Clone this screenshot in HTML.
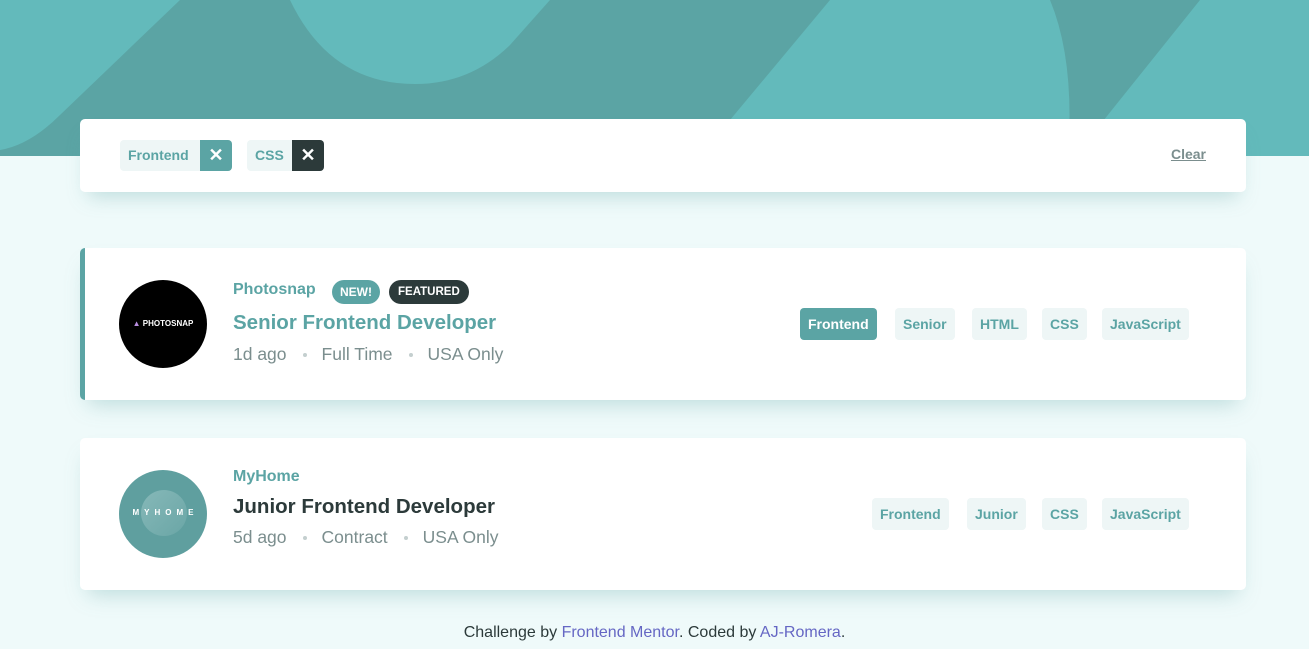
<!DOCTYPE html>
<html><head><meta charset="utf-8"><style>
*{box-sizing:border-box;margin:0;padding:0}
body{width:1309px;height:649px;overflow:hidden;background:#effafa;font-family:"Liberation Sans",sans-serif;position:relative}
.hdr{position:absolute;left:0;top:0;width:1309px;height:156px}
.card{position:absolute;left:80px;width:1166px;background:#fff;border-radius:5px;box-shadow:0 12px 20px -8px rgba(91,164,164,.35)}
.tag{position:absolute;height:32px;line-height:32px;padding:0 8px;border-radius:4px;background:#eef6f6;color:#5ba4a4;font-weight:bold;font-size:14px}
.abs{position:absolute;white-space:nowrap}
.meta{color:#7b8e8e;font-size:17.5px}
.dot{display:inline-block;width:4px;height:4px;border-radius:50%;background:#c4cfcf;margin:0 15px 0 16px;vertical-align:middle}
</style></head><body>
<svg class="hdr" viewBox="0 0 1309 156" preserveAspectRatio="none">
<rect width="1309" height="156" fill="#5ba4a4"/>
<path d="M0 0 L180 0 L60 115 Q30 145 0 150 Z" fill="#63babb"/>
<path d="M290 0 L550 0 L510 45 Q470 84 415 84 Q330 84 290 0 Z" fill="#63babb"/>
<path d="M830 0 L1050 0 Q1075 60 1068 156 L700 156 Z" fill="#63babb"/>
<path d="M1200 0 L1309 0 L1309 156 L1075 156 Z" fill="#63babb"/>
</svg>
<div class="card" style="top:119px;height:73px">
 <div class="tag" style="left:40px;top:21px;height:31px;line-height:31px;padding:0 0 0 8px;width:112px;overflow:hidden">Frontend<span style="position:absolute;right:0;top:0;width:32px;height:31px;background:#5ba4a4;color:#fff;text-align:center;font-size:18px">✕</span></div>
 <div class="tag" style="left:167px;top:21px;height:31px;line-height:31px;padding:0 0 0 8px;width:77px;overflow:hidden">CSS<span style="position:absolute;right:0;top:0;width:32px;height:31px;background:#2c3a3a;color:#fff;text-align:center;font-size:18px">✕</span></div>
 <div class="abs" style="right:40px;top:27px;color:#7b8e8e;font-weight:bold;font-size:14px;text-decoration:underline">Clear</div>
</div>
<div class="card" style="top:248px;height:152px;border-left:5px solid #5ba4a4">
 <div class="abs" style="left:34px;top:32px;width:88px;height:88px;border-radius:50%;background:#000;color:#fff;font-size:8px;font-weight:bold;text-align:center;line-height:88px"><span style="color:#b98ee0">▲</span> PHOTOSNAP</div>
 <div class="abs" style="left:148px;top:33px;color:#5ba4a4;font-weight:bold;font-size:16px">Photosnap</div>
 <div class="abs" style="left:247px;top:32px;height:24px;line-height:24px;padding:0 8px;border-radius:12px;background:#5ba4a4;color:#fff;font-size:12px;font-weight:bold">NEW!</div>
 <div class="abs" style="left:304px;top:32px;height:24px;line-height:24px;padding:0 9px;border-radius:12px;background:#2c3a3a;color:#fff;font-size:11.5px;font-weight:bold">FEATURED</div>
 <div class="abs" style="left:148px;top:63px;color:#5ba4a4;font-weight:bold;font-size:20.5px">Senior Frontend Developer</div>
 <div class="abs meta" style="left:148px;top:96px">1d ago<span class="dot"></span>Full Time<span class="dot"></span>USA Only</div>
 <div class="tag" style="left:715px;top:60px;background:#5ba4a4;color:#fff">Frontend</div>
 <div class="tag" style="left:810px;top:60px">Senior</div>
 <div class="tag" style="left:887px;top:60px">HTML</div>
 <div class="tag" style="left:957px;top:60px">CSS</div>
 <div class="tag" style="left:1017px;top:60px">JavaScript</div>
</div>
<div class="card" style="top:438px;height:152px">
 <div class="abs" style="left:39px;top:32px;width:88px;height:88px;border-radius:50%;background:#5f9f9f"><div style="position:absolute;left:22px;top:20px;width:46px;height:46px;border-radius:50%;background:linear-gradient(135deg,#86b8b8,#6aa6a6)"></div><div style="position:absolute;width:88px;top:38px;text-align:center;color:#fff;font-size:8px;font-weight:bold;letter-spacing:5px;padding-left:5px">MYHOME</div></div>
 <div class="abs" style="left:153px;top:30px;color:#5ba4a4;font-weight:bold;font-size:16px">MyHome</div>
 <div class="abs" style="left:153px;top:57px;color:#2c3a3a;font-weight:bold;font-size:20.5px">Junior Frontend Developer</div>
 <div class="abs meta" style="left:153px;top:89px">5d ago<span class="dot"></span>Contract<span class="dot"></span>USA Only</div>
 <div class="tag" style="left:792px;top:60px">Frontend</div>
 <div class="tag" style="left:887px;top:60px">Junior</div>
 <div class="tag" style="left:962px;top:60px">CSS</div>
 <div class="tag" style="left:1022px;top:60px">JavaScript</div>
</div>
<div class="abs" style="left:0;width:1309px;text-align:center;top:624px;font-size:16px;color:#2c3a3a">Challenge by <span style="color:#6567c4">Frontend Mentor</span>. Coded by <span style="color:#6567c4">AJ-Romera</span>.</div>
</body></html>
